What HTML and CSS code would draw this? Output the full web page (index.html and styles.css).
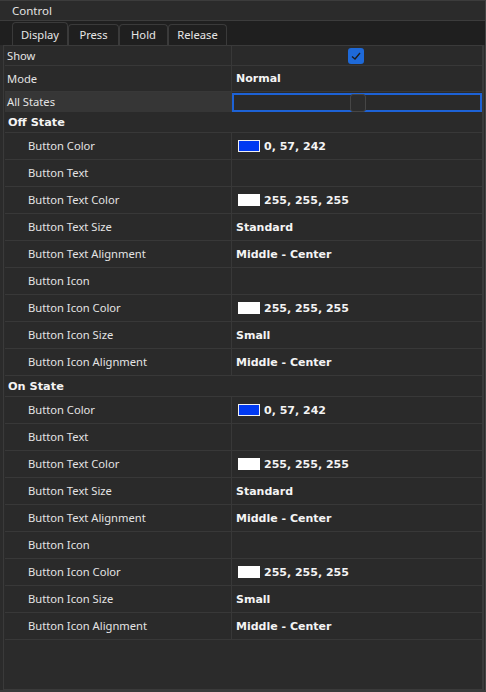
FILE: index.html
```html
<!DOCTYPE html>
<html lang="en">
<head>
    <meta charset="UTF-8">
    <title>Control</title>
    <link rel="stylesheet" href="styles.css">
</head>
<body>
    <div class="window">
        <div class="titlebar">Control</div>

        <div class="tabs">
            <div class="tab active">Display</div>
            <div class="tab press">Press</div>
            <div class="tab hold">Hold</div>
            <div class="tab release">Release</div>
        </div>

        <div class="panel">
            <div class="row top show">
                <div class="label">Show</div>
                <div class="value center">
                    <span class="check">
                        <svg width="16" height="16" viewBox="0 0 16 16"><polyline points="4,8.5 7,11 12,5" fill="none" stroke="#1c1c1c" stroke-width="1.4"/></svg>
                    </span>
                </div>
            </div>
            <div class="row top mode">
                <div class="label">Mode</div>
                <div class="value"><b>Normal</b></div>
            </div>
            <div class="row top states">
                <div class="label">All States</div>
                <div class="value slider"><span class="thumb"></span></div>
            </div>

            <div class="section">Off State</div>
            <div class="row"><div class="label">Button Color</div><div class="value"><span class="swatch blue"></span><b>0, 57, 242</b></div></div>
            <div class="row"><div class="label">Button Text</div><div class="value"></div></div>
            <div class="row"><div class="label">Button Text Color</div><div class="value"><span class="swatch white"></span><b>255, 255, 255</b></div></div>
            <div class="row"><div class="label">Button Text Size</div><div class="value"><b>Standard</b></div></div>
            <div class="row"><div class="label">Button Text Alignment</div><div class="value"><b>Middle - Center</b></div></div>
            <div class="row"><div class="label">Button Icon</div><div class="value"></div></div>
            <div class="row"><div class="label">Button Icon Color</div><div class="value"><span class="swatch white"></span><b>255, 255, 255</b></div></div>
            <div class="row"><div class="label">Button Icon Size</div><div class="value"><b>Small</b></div></div>
            <div class="row"><div class="label">Button Icon Alignment</div><div class="value"><b>Middle - Center</b></div></div>

            <div class="section">On State</div>
            <div class="row"><div class="label">Button Color</div><div class="value"><span class="swatch blue"></span><b>0, 57, 242</b></div></div>
            <div class="row"><div class="label">Button Text</div><div class="value"></div></div>
            <div class="row"><div class="label">Button Text Color</div><div class="value"><span class="swatch white"></span><b>255, 255, 255</b></div></div>
            <div class="row"><div class="label">Button Text Size</div><div class="value"><b>Standard</b></div></div>
            <div class="row"><div class="label">Button Text Alignment</div><div class="value"><b>Middle - Center</b></div></div>
            <div class="row"><div class="label">Button Icon</div><div class="value"></div></div>
            <div class="row"><div class="label">Button Icon Color</div><div class="value"><span class="swatch white"></span><b>255, 255, 255</b></div></div>
            <div class="row"><div class="label">Button Icon Size</div><div class="value"><b>Small</b></div></div>
            <div class="row"><div class="label">Button Icon Alignment</div><div class="value"><b>Middle - Center</b></div></div>
        </div>
    </div>
</body>
</html>
```

FILE: styles.css
```css
* {
    margin: 0;
    padding: 0;
    box-sizing: border-box;
}

body {
    background: #2b2b2b;
    font-family: "Noto Sans", "Open Sans", sans-serif;
    font-size: 11.2px;
    color: #e4e4e4;
}

.window {
    width: 486px;
    height: 692px;
    display: flex;
    flex-direction: column;
    border-right: 1px solid #444;
    border-bottom: 2px solid #3a3a3a;
    border-top: 1px solid #3c3c3c;
}

.titlebar {
    height: 20px;
    line-height: 19px;
    padding-left: 12px;
    font-size: 11.5px;
    background: #2b2b2b;
    border-bottom: 1px solid #3c3c3c;
}

.tabs {
    height: 24px;
    background: #1f1f1f;
    display: flex;
    align-items: flex-end;
    padding-left: 12px;
}

.tab {
    width: 51px;
    height: 21px;
    line-height: 20px;
    text-align: center;
    border: 1px solid #3a3a3a;
    border-bottom: none;
    border-radius: 4px 4px 0 0;
    color: #e6e6e6;
    background: #1f1f1f;
}

.tab.active {
    width: 56px;
    height: 23px;
    line-height: 23px;
}

.tab.hold { width: 49px; }
.tab.release { width: 59px; }

.panel {
    flex: 1;
    margin: 0 1px 0 3px;
    border: 1px solid #3a3a3a;
    border-right: 2px solid #3a3a3a;
    background: #2b2b2b;
    padding-left: 1px;
}

.row {
    display: grid;
    grid-template-columns: 227px 1fr;
    height: 27px;
    border-bottom: 1px solid #383838;
    background: #2a2a2a;
}

.row .label {
    padding-left: 23px;
    padding-bottom: 1px;
    border-right: 1px solid #383838;
    display: flex;
    align-items: center;
}

.row .value {
    display: flex;
    align-items: center;
    padding-left: 4px;
}

.row.top .label {
    padding-left: 2px;
}

.row.show { height: 20px; }
.row.mode { height: 26px; }

.row.states {
    height: 20px;
    border-bottom: none;
}

.row.states .label {
    background: #363636;
}

.row.states .value {
    height: 19px;
    border: 2px solid #1d62d6;
    margin-top: 1px;
    justify-content: center;
}

.center {
    justify-content: center;
}

.row .value.center {
    padding-left: 0;
}

.check {
    width: 16px;
    height: 16px;
    margin-left: -2px;
    border-radius: 3px;
    background: #1e69d8;
    display: flex;
}

.thumb {
    width: 16px;
    height: 18px;
    margin-left: -2px;
    border: 1px solid #464646;
    border-radius: 3px;
    background: #2c2c2c;
}

b {
    font-family: "DejaVu Sans", sans-serif;
    font-weight: bold;
    font-size: 11px;
    color: #f4f4f4;
}

.swatch {
    width: 22px;
    height: 12px;
    margin: 0 4px 0 2px;
}

.swatch.blue {
    background: #0039f2;
    border: 1px solid #f0f0f0;
}

.swatch.white {
    background: #ffffff;
}

.section {
    height: 21px;
    line-height: 21px;
    padding-left: 3px;
    font-family: "DejaVu Sans", sans-serif;
    font-weight: bold;
    font-size: 11.3px;
    color: #f4f4f4;
    background: #2a2a2a;
    border-bottom: 1px solid #383838;
}
```
